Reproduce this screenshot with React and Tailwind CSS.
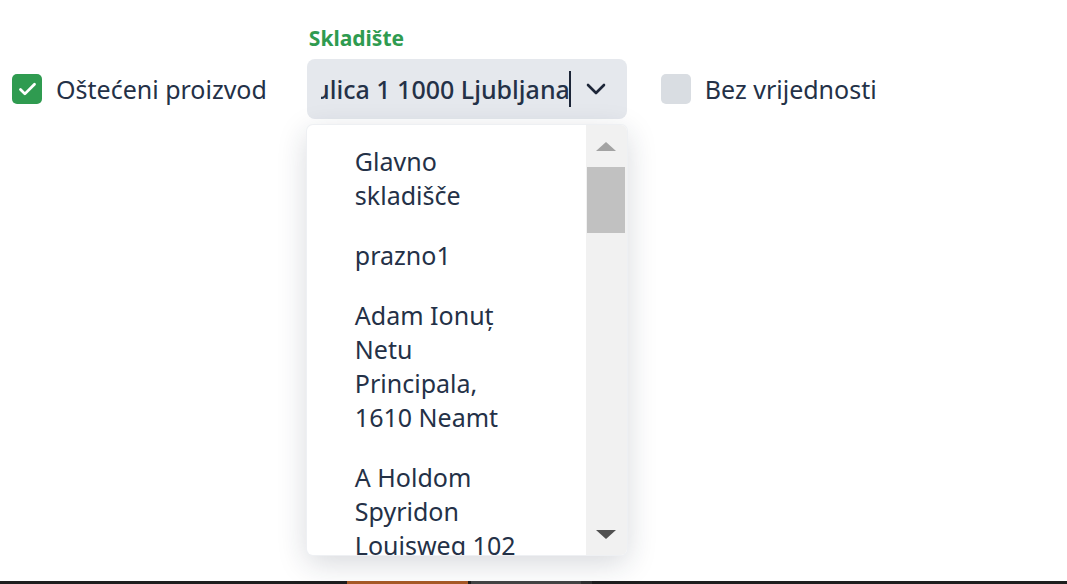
import { Check } from 'lucide-react'

const options = [
  ['Glavno', 'skladišče'],
  ['prazno1'],
  ['Adam Ionuț', 'Netu', 'Principala,', '1610 Neamt'],
  ['A Holdom', 'Spyridon', 'Louisweg 102'],
]

// ── Checkbox ──────────────────────────────────────────────────────────────────
function Checkbox({ checked, label }) {
  return (
    <label className="flex h-[60px] items-center gap-[14px]">
      <span
        className={
          checked
            ? 'flex h-[30px] w-[30px] items-center justify-center rounded-[5px] bg-[#2f9b50]'
            : 'flex h-[30px] w-[30px] items-center justify-center rounded-[5px] bg-[#d9dde2]'
        }
      >
        {checked && <Check size={21} strokeWidth={3.2} className="text-white" />}
      </span>
      <span className="text-[25px] leading-none text-[#243147]">{label}</span>
    </label>
  )
}

// ── Fake scrollbar ────────────────────────────────────────────────────────────
function Scrollbar() {
  return (
    <div className="flex w-[41px] shrink-0 flex-col items-center bg-[#f1f1f1] pt-[17px] pb-[16px]">
      <div className="h-0 w-0 border-x-[10px] border-b-[9px] border-x-transparent border-b-[#a3a3a3]" />
      <div className="mt-[16px] h-[66px] w-[38px] bg-[#c1c1c1]" />
      <div className="flex-1" />
      <div className="h-0 w-0 border-x-[10px] border-t-[9px] border-x-transparent border-t-[#505050]" />
    </div>
  )
}

export default function App() {
  return (
    <div className="flex h-[584px] w-full flex-col bg-white font-['Noto_Sans',sans-serif] text-[#243147]">
      <div className="flex-1 pt-[25px] pl-[12px]">
        <div className="flex items-end">
          <Checkbox checked label="Oštećeni proizvod" />

          {/* Skladište select */}
          <div className="ml-[40px] flex flex-col">
            <span className="mb-[8px] pl-[2px] text-[21px] leading-[26px] font-bold text-[#2f9b50]">Skladište</span>
            <div className="relative flex h-[60px] w-[320px] items-center rounded-[8px] bg-[#e5e8ed] pl-[14px] pr-[21px]">
              <div className="flex min-w-0 flex-1 items-center justify-end overflow-hidden">
                <span className="whitespace-nowrap text-[25px] font-medium leading-none">
                  Slovenska ulica 1 1000 Ljubljana
                </span>
                <span className="ml-[-1px] h-[36px] w-[2px] shrink-0 bg-[#1d2638]" />
              </div>
              <svg width="20" height="12" viewBox="0 0 20 12" className="ml-[15px] shrink-0">
                <path d="M2 2l8 8 8-8" fill="none" stroke="#1d2638" strokeWidth="2.6" strokeLinecap="round" strokeLinejoin="round" />
              </svg>

              {/* Dropdown */}
              <div className="absolute top-[66px] left-0 flex h-[430px] w-[320px] overflow-hidden rounded-[6px] bg-white shadow-[0_8px_30px_rgba(30,41,59,0.18)] ring-1 ring-[#eef0f3]">
                <ul className="flex-1 pt-[6px]">
                  {options.map((lines, i) => (
                    <li key={i} className="py-[13px] pl-[48px] text-[25px] leading-[34px]">
                      {lines.map((l) => (
                        <div key={l}>{l}</div>
                      ))}
                    </li>
                  ))}
                </ul>
                <Scrollbar />
              </div>
            </div>
          </div>

          <div className="ml-[34px]">
            <Checkbox label="Bez vrijednosti" />
          </div>
        </div>
      </div>

      {/* bottom taskbar strip */}
      <div className="flex h-[3px] shrink-0 bg-[#1e1e1e]">
        <div className="w-[347px]" />
        <div className="w-[121px] bg-[#a85a26]" />
        <div className="w-[3px]" />
        <div className="w-[110px] bg-[#444444]" />
        <div className="w-[11px] bg-[#303030]" />
      </div>
    </div>
  )
}
